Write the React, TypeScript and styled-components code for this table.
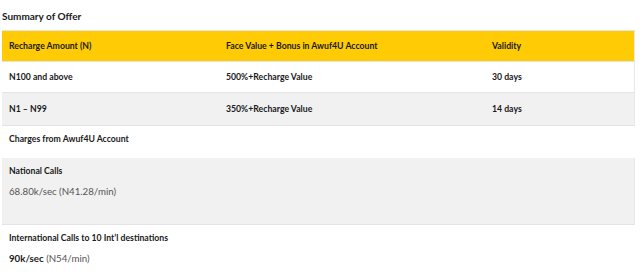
import styled, {createGlobalStyle} from "styled-components";

const GlobalStyle = createGlobalStyle`
  html, body {
    margin: 0;
    padding: 0;
    background: #ffffff;
  }
  body {
    font-family: Lato, "Noto Sans", sans-serif;
    color: #1a1a1a;
  }
`;

const Page = styled.div`
  width: 633px;
  margin-left: 2px;
`;

const Title = styled.h3`
  margin: 0;
  height: 30px;
  display: flex;
  align-items: center;
  font-size: 10px;
  font-weight: 700;
  padding-top: 2px;
  box-sizing: border-box;
`;

const Row = styled.div<{ $shade?: "head" | "grey" | "white"; $height: number }>`
  display: grid;
  grid-template-columns: 217px 266px 1fr;
  align-items: center;
  height: ${p => p.$height}px;
  padding-bottom: 2px;
  box-sizing: border-box;
  border-bottom: 1px solid #e4e4e4;
  border-right: 1px solid #e8e8e8;
  background: ${p => p.$shade === "head" ? "#ffcb05" : p.$shade === "grey" ? "#f1f1f1" : "#ffffff"};
  ${p => p.$shade === "head" && "border-top: 1px solid #e4e4e4;"}
`;

const Cell = styled.div`
  padding-left: 7px;
  font-size: 8.7px;
  font-weight: 700;
  white-space: nowrap;
`;

const Section = styled.div`
  height: 32px;
  box-sizing: border-box;
  padding: 7px 7px 0;
  font-size: 8.7px;
  font-weight: 700;
  white-space: nowrap;
`;

const Block = styled.div<{ $grey?: boolean; $height: number }>`
  display: flex;
  flex-direction: column;
  height: ${p => p.$height}px;
  box-sizing: border-box;
  padding: 7px 7px 0;
  gap: 9px;
  background: ${p => p.$grey ? "#f1f1f1" : "#ffffff"};
  border-bottom: ${p => p.$grey ? "1px solid #e4e4e4" : "none"};
  border-right: ${p => p.$grey ? "1px solid #e8e8e8" : "none"};
`;

const Label = styled.div`
  font-size: 8.7px;
  font-weight: 700;
  white-space: nowrap;
`;

const Rate = styled.div`
  font-size: 9.7px;
  color: #555555;
  white-space: nowrap;
`;

const Strong = styled.span`
  color: #1a1a1a;
  font-weight: 700;
`;

const offers = [
    {amount: "N100 and above", value: "500%+Recharge Value", validity: "30 days"},
    {amount: "N1 \u2013 N99", value: "350%+Recharge Value", validity: "14 days"},
];

export default function App() {
    return (
        <>
            <GlobalStyle />
            <Page>
                <Title>Summary of Offer</Title>
                <Row $shade="head" $height={32}>
                    <Cell>Recharge Amount (N)</Cell>
                    <Cell>Face Value + Bonus in Awuf4U Account</Cell>
                    <Cell>Validity</Cell>
                </Row>
                {offers.map((o, i) => (
                    <Row key={o.amount} $shade={i % 2 ? "grey" : "white"} $height={i % 2 ? 33 : 31}>
                        <Cell>{o.amount}</Cell>
                        <Cell>{o.value}</Cell>
                        <Cell>{o.validity}</Cell>
                    </Row>
                ))}
                <Section>Charges from Awuf4U Account</Section>
                <Block $grey $height={67}>
                    <Label>National Calls</Label>
                    <Rate>68.80k/sec (N41.28/min)</Rate>
                </Block>
                <Block $height={56}>
                    <Label>International Calls to 10 Int’l destinations</Label>
                    <Rate><Strong>90k/sec</Strong> (N54/min)</Rate>
                </Block>
            </Page>
        </>
    );
}
